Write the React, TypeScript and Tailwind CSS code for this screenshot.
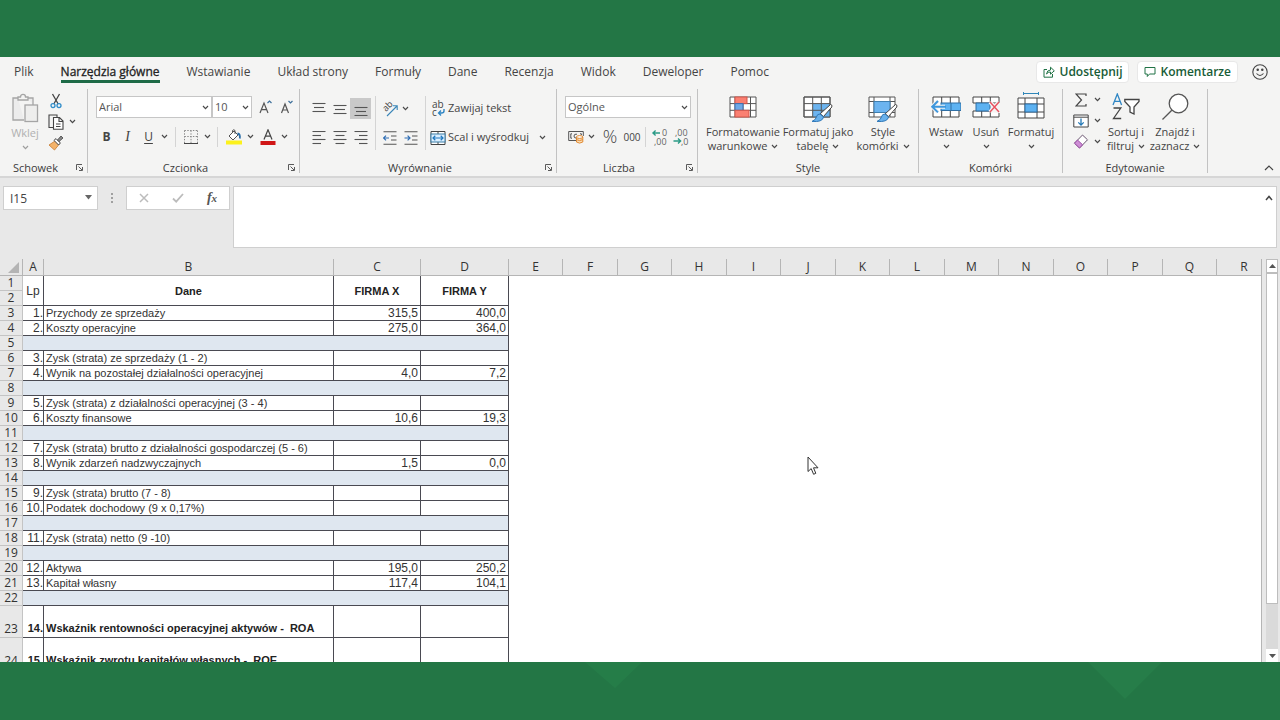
import type { ReactNode } from "react";

/* ---------- shared pieces ---------- */

function Chevron({ className = "" }: { className?: string }) {
  return (
    <svg className={`h-[5px] w-[7px] shrink-0 ${className}`} viewBox="0 0 7 5" fill="none" stroke="#4a4a4a" strokeWidth="1.2" aria-hidden="true">
      <path d="M1 1 L3.5 3.6 L6 1" />
    </svg>
  );
}

function Group({ label, launcher, width, children }: { label: string; launcher?: boolean; width: string; children: ReactNode }) {
  return (
    <section aria-label={label} className={`flex h-[84px] shrink-0 flex-col border-r border-[#c2c2c2] ${width}`}>
      <div className="flex-1">{children}</div>
      <div className="flex h-[11px] items-center">
        <span className="flex-1 text-center text-[11px] leading-[11px] text-[#3c3c3c]">{label}</span>
        {launcher && (
          <button aria-label={`${label}: więcej opcji`} className="flex h-[11px] w-4 items-center justify-center">
            <svg className="h-[7px] w-[7px]" viewBox="0 0 7 7" fill="none" stroke="#5a5a5a" strokeWidth="1" aria-hidden="true">
              <path d="M0.5 6 V0.5 H6 M2.5 2.5 L6 6 M6.5 3 V6.5 H3" />
            </svg>
          </button>
        )}
      </div>
    </section>
  );
}

function Tool({ label, width = "w-[21px]", active, children }: { label: string; width?: string; active?: boolean; children: ReactNode }) {
  return (
    <button aria-label={label} className={`flex h-[21px] shrink-0 items-center justify-center text-[#444] ${width} ${active ? "bg-[#c9c9c9]" : ""}`}>
      {children}
    </button>
  );
}

function BigTool({ lines, width, gray, children }: { lines: [string, string]; width: string; gray?: boolean; children: ReactNode }) {
  return (
    <button className={`flex shrink-0 flex-col items-center whitespace-nowrap text-[11px] leading-[14px] ${width} ${gray ? "text-[#b0b0b0]" : "text-[#444]"}`}>
      <span className="flex h-9 items-center justify-center">{children}</span>
      <span>{lines[0]}</span>
      <span className="flex h-[14px] items-center gap-1">
        {lines[1]}
        <Chevron className={gray ? "opacity-50" : ""} />
      </span>
    </button>
  );
}

function Rule({ className = "h-5" }: { className?: string }) {
  return <span className={`w-px shrink-0 bg-[#d4d4d4] ${className}`} />;
}

function Lines({ rows }: { rows: [number, number, number][] }) {
  return (
    <svg className="h-[14px] w-[14px]" viewBox="0 0 14 14" stroke="#555" strokeWidth="1.1" aria-hidden="true">
      {rows.map(([x1, x2, y]) => (
        <line key={y} x1={x1} x2={x2} y1={y} y2={y} />
      ))}
    </svg>
  );
}

/* ---------- icons ---------- */

const PasteIcon = () => (
  <svg className="h-[30px] w-7" viewBox="0 0 28 30" fill="none" stroke="#a5a5a5" strokeWidth="1.3" aria-hidden="true">
    <path d="M13 27 H2 V5 H7 M17 5 H22 V12" fill="#ececec" />
    <path d="M7 7 V4 H9.5 C9.5 0.5 14.5 0.5 14.5 4 H17 V7 Z" fill="#f4f4f3" />
    <rect x="14" y="12" width="12.5" height="16.5" fill="#eeeeed" />
  </svg>
);

const CutIcon = () => (
  <svg className="h-4 w-3" viewBox="0 0 12 16" fill="none" strokeWidth="1.3" aria-hidden="true">
    <path d="M2.5 1 L8.2 11 M9.5 1 L3.8 11" stroke="#444" />
    <circle cx="3" cy="12.6" r="2" stroke="#2f8cc9" />
    <circle cx="9" cy="12.6" r="2" stroke="#2f8cc9" />
  </svg>
);

const CopyIcon = () => (
  <svg className="h-4 w-4" viewBox="0 0 16 16" fill="none" stroke="#444" strokeWidth="1.1" aria-hidden="true">
    <path d="M5 13.5 H1 V1 H9 V3" />
    <path d="M5.5 3.5 H11.5 L15 7 V15.2 H5.5 Z M11 3.8 V7.5 H15 M8 10 H12.5 M8 12.5 H12.5" fill="#fff" />
  </svg>
);

const BrushIcon = () => (
  <svg className="h-4 w-4" viewBox="0 0 16 16" aria-hidden="true">
    <path d="M7 6 L1 10 L6.5 15 L11 9.5 Z" fill="#f4b36a" stroke="#c67a2f" strokeWidth="0.8" />
    <path d="M6 5.4 L8 3.6 L12.4 8 L10.6 10 Z" fill="#fff" stroke="#444" />
    <path d="M9.5 5 L13 1 L15 3 L11 6.6 Z" fill="#888" stroke="#444" strokeWidth="0.8" />
  </svg>
);

function FontSizeIcon({ grow }: { grow?: boolean }) {
  return (
    <svg className="h-4 w-4" viewBox="0 0 16 16" fill="none" stroke="#555" strokeWidth="1.2" aria-hidden="true">
      <path d={grow ? "M2 14 L6 4 L10 14 M3.5 10.6 H8.5" : "M2.5 14 L6 5 L9.5 14 M3.8 11 H8.2"} />
      <path d={grow ? "M9.5 4 L11.5 2 L13.5 4" : "M9.5 2 L11.5 4 L13.5 2"} stroke="#3d6f9a" />
    </svg>
  );
}

const BordersIcon = () => (
  <svg className="h-4 w-4" viewBox="0 0 16 16" fill="none" stroke="#888" aria-hidden="true">
    <path d="M1.5 1.5 H14.5 M1.5 7.5 H14.5 M1.5 1.5 V14 M8 1.5 V14 M14.5 1.5 V14" strokeDasharray="1.4 1.4" />
    <path d="M1 14.5 H15" stroke="#444" />
  </svg>
);

const FillIcon = () => (
  <svg className="h-4 w-4" viewBox="0 0 16 16" fill="none" aria-hidden="true">
    <rect x="0" y="11.5" width="16" height="4" fill="#fcf11c" />
    <path d="M3 7 L8 2 L12 6 L7 11 Z" fill="#fff" stroke="#555" />
    <path d="M6.5 4 V1.5 Q7.7 0 9 1.5 V5" stroke="#555" />
    <path d="M11.5 4.5 Q14.5 5 13.8 9.5" stroke="#2b6ea8" strokeWidth="1.8" />
  </svg>
);

const FontColorIcon = () => (
  <svg className="h-4 w-4" viewBox="0 0 16 16" fill="none" aria-hidden="true">
    <rect x="0.5" y="12" width="15" height="4" fill="#d01616" />
    <path d="M4 10.5 L8 0.8 L12 10.5 M5.4 7.2 H10.6" stroke="#444" strokeWidth="1.2" />
  </svg>
);

const OrientationIcon = () => (
  <svg className="h-4 w-4 overflow-visible" viewBox="0 0 16 16" fill="none" aria-hidden="true">
    <text x="0" y="0" fontSize="9" fill="#444" fontFamily="Open Sans" transform="translate(4 11) rotate(-45)">ab</text>
    <path d="M5 15 L15 5 M11 4.8 H15.2 V9" stroke="#3a86b8" strokeWidth="1.1" />
  </svg>
);

const WrapIcon = () => (
  <svg className="h-4 w-4 overflow-visible" viewBox="0 0 16 16" fill="none" aria-hidden="true">
    <text x="2" y="7" fontSize="10" fill="#444" fontFamily="Open Sans">ab</text>
    <text x="2" y="15" fontSize="10" fill="#444" fontFamily="Open Sans">c</text>
    <path d="M14 8 V10 Q14 12 11.5 12 H8.8 M11 9.6 L8.6 12 L11 14.4" stroke="#2f86c4" strokeWidth="1.4" />
  </svg>
);

const MergeIcon = () => (
  <svg className="h-4 w-4" viewBox="0 0 16 16" fill="none" aria-hidden="true">
    <path d="M1 1.5 H15 V14.5 H1 Z M8 1.5 V4 M8 12 V14.5" fill="#fff" stroke="#444" />
    <rect x="1" y="4" width="14" height="8" fill="#dcefff" stroke="#3a7ea8" />
    <path d="M3 8 H13 M5.3 5.8 L3 8 L5.3 10.2 M10.7 5.8 L13 8 L10.7 10.2" stroke="#2079c0" strokeWidth="1.2" />
  </svg>
);

function IndentIcon({ outward }: { outward?: boolean }) {
  return (
    <svg className="h-[14px] w-[14px]" viewBox="0 0 14 14" fill="none" stroke="#555" strokeWidth="1.1" aria-hidden="true">
      <path d="M0.5 0.8 H13.5 M8 5 H13.5 M8 9 H13.5 M0.5 13.2 H13.5" />
      <path d={outward ? "M0.5 7 H6 M3 4.6 L0.6 7 L3 9.4" : "M0.5 7 H6 M3.6 4.6 L6 7 L3.6 9.4"} stroke="#2e6db4" strokeWidth="1.2" />
    </svg>
  );
}

const MoneyIcon = () => (
  <svg className="h-[14px] w-4" viewBox="0 0 16 14" fill="none" stroke="#555" aria-hidden="true">
    <path d="M0.7 1.5 H15.3 V6 M0.7 1.5 V10.5 H8" />
    <path d="M4 3.8 H2.8 V8.2 H4 M12 3.8 H13.4 V5 M9 4.2 Q6 3.6 6 6 Q6 8.2 8 8" />
    <path d="M8.5 7 V12 Q11.5 14.2 14.8 12 V7" fill="#fbdcb4" stroke="#e08a33" />
    <ellipse cx="11.6" cy="7" rx="3.2" ry="1.4" fill="#fff" stroke="#e08a33" />
    <path d="M8.5 9.6 Q11.5 11.6 14.8 9.6" stroke="#e08a33" />
  </svg>
);

function DecimalIcon({ more }: { more?: boolean }) {
  return (
    <svg className="h-4 w-4 overflow-visible" viewBox="0 0 16 16" fill="none" aria-hidden="true">
      <g fontSize="9" fill="#666" fontFamily="Open Sans">
        <text x={more ? 10 : 2} y="7">{more ? "0" : ",00"}</text>
        <text x={more ? 2 : 8} y="16">{more ? ",00" : ",0"}</text>
      </g>
      <path d={more ? "M1 4 H8 M3.6 1.6 L1 4 L3.6 6.4" : "M0.5 12 H7.5 M5 9.6 L7.6 12 L5 14.4"} stroke="#2a9a86" strokeWidth="1.4" />
    </svg>
  );
}

const ConditionalIcon = () => (
  <svg className="h-[22px] w-7" viewBox="0 0 28 22" fill="none" stroke="#555" aria-hidden="true">
    <path d="M1 1 H27 V21 H1 Z M1 7.6 H27 M1 14.3 H27 M6 1 V21 M14 1 V21 M21.5 1 V21" fill="#fff" />
    <rect x="6" y="1" width="12" height="6.6" fill="#fa8072" stroke="#d5564a" />
    <rect x="6" y="7.6" width="8" height="6.7" fill="#6fa8e6" stroke="#3f6fb0" />
    <rect x="6" y="14.3" width="14" height="6.7" fill="#fa8072" stroke="#d5564a" />
  </svg>
);

const PaintBrush = () => (
  <g>
    <path d="M27.5 8.5 Q29.5 8.5 28.8 11 L20.5 20.5 L17.2 17.8 Z" fill="#fff" stroke="#444" />
    <path d="M17 18 L20.6 21 Q19.5 26.4 9 25.4 Q13 23.8 13.4 21 Q14.2 17.8 17 18 Z" fill="#69b1ec" stroke="#2f78b8" />
  </g>
);

const TableIcon = () => (
  <svg className="mt-1 h-[27px] w-[30px]" viewBox="0 0 30 27" fill="none" stroke="#555" aria-hidden="true">
    <path d="M1 1 H27 V21 H1 Z" fill="#fff" />
    <path d="M9.7 7.6 H27 V21 H9.7 Z" fill="#6cb4f0" stroke="none" />
    <path d="M1 1 H27 V21 H1 Z M1 7.6 H27 M1 14.3 H27 M9.7 1 V21 M18.3 1 V21" />
    <PaintBrush />
  </svg>
);

const CellStyleIcon = () => (
  <svg className="mt-1 h-[27px] w-[30px]" viewBox="0 0 30 27" fill="none" stroke="#555" aria-hidden="true">
    <path d="M1 1 H27 V21 H1 Z M1 5.5 H27 M1 16.5 H27 M6 1 V21 M22 1 V21" fill="#fff" />
    <rect x="6" y="5.5" width="16" height="11" fill="#6cb4f0" stroke="#3f7fb0" />
    <PaintBrush />
  </svg>
);

const InsertIcon = () => (
  <svg className="h-[22px] w-[30px]" viewBox="0 0 30 22" fill="none" stroke="#444" aria-hidden="true">
    <path d="M2 1 H28 V21 H2 Z M10.7 1 V21 M19.3 1 V21" fill="#fff" />
    <rect x="10" y="7" width="20" height="7.5" fill="#5db2f2" stroke="#2f6fa5" />
    <path d="M20 7 V14.5" stroke="#2f6fa5" />
    <path d="M14 10.7 H2 M7 5 L1.2 10.7 L7 16.4" stroke="#f4f4f3" strokeWidth="4" />
    <path d="M15 10.7 H1.4 M7 5 L1.2 10.7 L7 16.4" stroke="#3e97dd" strokeWidth="2" />
  </svg>
);

const DeleteIcon = () => (
  <svg className="h-[22px] w-7" viewBox="0 0 28 22" fill="none" stroke="#444" aria-hidden="true">
    <path d="M1 7 V1 H27 V7 M1 15 V21 H27 V17 M9.7 1 V7 M18.3 1 V7 M9.7 15 V21 M18.3 15 V21 M1 7 H27 M1 15 H18" fill="#fff" />
    <path d="M4 7 H18 V15 H4 Z" fill="#5db2f2" stroke="#2f6fa5" />
    <path d="M18 6 L27 16 M27 6 L18 16" stroke="#f4f4f3" strokeWidth="4" />
    <path d="M18 6 L27 16 M27 6 L18 16" stroke="#e9505e" strokeWidth="1.4" />
  </svg>
);

const FormatIcon = () => (
  <svg className="mb-1 h-[27px] w-7" viewBox="0 0 28 27" fill="none" stroke="#444" aria-hidden="true">
    <path d="M6.5 1.5 H21.5 M6.5 0 V3 M21.5 0 V3" stroke="#2f86b8" />
    <path d="M1 6 H27 V26 H1 Z M1 12 H27 M1 20 H27 M8 6 V26 M20 6 V26" fill="#fff" />
    <rect x="8" y="12" width="12" height="8" fill="#5db2f2" stroke="#2f6fa5" />
  </svg>
);

const SumIcon = () => (
  <svg className="h-[14px] w-3" viewBox="0 0 12 14" fill="none" stroke="#444" strokeWidth="1.2" aria-hidden="true">
    <path d="M11 3 V1 H1 L6.5 7 L1 13 H11 V11" />
  </svg>
);

const FillDownIcon = () => (
  <svg className="h-[14px] w-4" viewBox="0 0 16 14" fill="none" stroke="#444" aria-hidden="true">
    <path d="M0.8 1 H15.2 V13 H0.8 Z M0.8 3.2 H15.2" fill="#fff" />
    <path d="M8 4.6 V11 M5.3 8.4 L8 11.1 L10.7 8.4" stroke="#2378b5" strokeWidth="1.3" />
  </svg>
);

const EraserIcon = () => (
  <svg className="h-[15px] w-4" viewBox="0 0 16 15" fill="none" aria-hidden="true">
    <path d="M9.5 1 L14.5 5.8 L6.5 14 L1.5 9.2 Z" fill="#fff" stroke="#6a5570" />
    <path d="M4.5 6 L9.6 10.8 L6.5 14 L1.5 9.2 Z" fill="#cf8fd6" stroke="#9a4fa5" />
  </svg>
);

const SortIcon = () => (
  <svg className="h-7 w-7" viewBox="0 0 28 28" fill="none" strokeWidth="1.3" aria-hidden="true">
    <path d="M1 12 L5.3 1 L9.6 12 M2.6 8.4 H8" stroke="#2f86c4" />
    <path d="M1.5 15 H8.8 L1.5 25.5 H9.2" stroke="#444" />
    <path d="M12.8 6.5 H27 V8.5 L22 14 V21 L18 19 V14 L12.8 8.5 Z" stroke="#444" fill="#fff" />
  </svg>
);

const SearchIcon = () => (
  <svg className="h-7 w-7" viewBox="0 0 28 28" fill="none" stroke="#555" strokeWidth="1.3" aria-hidden="true">
    <circle cx="17.5" cy="10.5" r="9.3" fill="#fff" />
    <path d="M10.8 17.2 L1.5 26.5" />
  </svg>
);

/* ---------- ribbon ---------- */

const tabs = ["Plik", "Narzędzia główne", "Wstawianie", "Układ strony", "Formuły", "Dane", "Recenzja", "Widok", "Deweloper", "Pomoc"];

function TabBar() {
  return (
    <div className="flex h-8 items-start">
      <nav className="flex flex-1 gap-[27px] pl-[14px]" aria-label="Karty wstążki">
        {tabs.map((tab) => (
          <button key={tab} className="pt-[7px] text-[12px] leading-4 text-[#444]">
            <span className={tab === "Narzędzia główne" ? "block border-b-[3px] border-[#1e6b47] text-[#222] [-webkit-text-stroke:0.3px_#222]" : "block border-b-[3px] border-transparent"}>{tab}</span>
          </button>
        ))}
      </nav>
      <div className="flex items-center gap-2 pt-1 pr-3 text-[12px] font-semibold text-[#185c37]">
        <button className="flex h-[22px] items-center gap-1 rounded-sm border border-[#e8e8e8] bg-white px-[6px]">
          <svg className="h-3 w-3" viewBox="0 0 12 12" fill="none" stroke="#217346" strokeWidth="1" aria-hidden="true">
            <path d="M4 3.5 H1 V11.2 H9.5 V8" />
            <path d="M3.5 8 Q4 4 7.5 4 V1.2 L11.3 4.8 L7.5 8.2 V6 Q5 5.8 3.5 8 Z" />
          </svg>
          Udostępnij
        </button>
        <button className="flex h-[22px] items-center gap-1 rounded-sm border border-[#e8e8e8] bg-white px-[6px]">
          <svg className="h-3 w-3" viewBox="0 0 12 12" fill="none" stroke="#217346" aria-hidden="true">
            <path d="M1 1.5 H11 V8 H5.5 L3.3 10.5 V8 H1 Z" />
          </svg>
          Komentarze
        </button>
        <button aria-label="Opinia" className="ml-[6px] h-4 w-4">
          <svg className="h-4 w-4" viewBox="0 0 16 16" fill="none" stroke="#444" strokeWidth="1.1" aria-hidden="true">
            <circle cx="8" cy="8" r="7.2" />
            <path d="M4.5 9.5 Q8 13.4 11.5 9.5" />
            <circle cx="5.7" cy="5.8" r="0.7" fill="#444" />
            <circle cx="10.3" cy="5.8" r="0.7" fill="#444" />
          </svg>
        </button>
      </div>
    </div>
  );
}

function Picker({ label, options, width }: { label: string; options: string[]; width: string }) {
  return (
    <label className={`relative block h-[22px] shrink-0 ${width}`}>
      <span className="sr-only">{label}</span>
      <select className="block h-full w-full appearance-none border border-[#c6c6c6] bg-white pl-[2px] text-[11px] leading-4 text-[#555]">
        {options.map((o) => (
          <option key={o}>{o}</option>
        ))}
      </select>
      <Chevron className="pointer-events-none absolute top-[9px] right-[3px]" />
    </label>
  );
}

function Ribbon() {
  return (
    <div className="flex">
      <Group label="Schowek" launcher width="w-[88px]">
        <div className="flex pt-px pl-[11px]">
          <BigTool lines={["Wklej", ""]} width="w-7" gray><PasteIcon /></BigTool>
          <div className="flex flex-col pl-[6px]">
            <Tool label="Wytnij"><CutIcon /></Tool>
            <div className="flex items-center">
              <Tool label="Kopiuj"><CopyIcon /></Tool>
              <Chevron className="ml-[3px]" />
            </div>
            <Tool label="Malarz formatów"><BrushIcon /></Tool>
          </div>
        </div>
      </Group>

      <Group label="Czcionka" launcher width="w-[212px]">
        <div className="flex flex-col gap-2 pt-[7px] pl-2">
          <div className="flex items-center">
            <Picker label="Czcionka" options={["Arial"]} width="w-[116px]" />
            <Picker label="Rozmiar" options={["10"]} width="w-10" />
            <span className="flex pl-[3px]">
              <Tool label="Zwiększ rozmiar"><FontSizeIcon grow /></Tool>
              <Tool label="Zmniejsz rozmiar"><FontSizeIcon /></Tool>
            </span>
          </div>
          <div className="flex items-center">
            <Tool label="Pogrubienie"><span className="text-[12px] font-bold">B</span></Tool>
            <Tool label="Kursywa"><span className="font-['Liberation_Serif'] text-[14px] italic">I</span></Tool>
            <Tool label="Podkreślenie"><span className="text-[12px] underline underline-offset-2">U</span></Tool>
            <Chevron className="mx-[2px]" />
            <span className="flex w-[10px] justify-center"><Rule /></span>
            <Tool label="Obramowanie"><BordersIcon /></Tool>
            <Chevron className="ml-[3px]" />
            <span className="flex w-3 justify-center"><Rule /></span>
            <Tool label="Kolor wypełnienia"><FillIcon /></Tool>
            <Chevron className="mx-[3px]" />
            <Tool label="Kolor czcionki"><FontColorIcon /></Tool>
            <Chevron className="ml-[3px]" />
          </div>
        </div>
      </Group>

      <Group label="Wyrównanie" launcher width="w-[257px]">
        <div className="flex items-center pt-[7px] pl-2">
          <div className="grid grid-cols-[21px_21px_21px] gap-y-2">
            <Tool label="Do góry"><Lines rows={[[0.5, 13.5, 1.5], [2, 12, 5.5], [0.5, 13.5, 9.5]]} /></Tool>
            <Tool label="Do środka w pionie"><Lines rows={[[0.5, 13.5, 3.5], [2, 12, 7.5], [0.5, 13.5, 11.5]]} /></Tool>
            <Tool label="Do dołu" active><Lines rows={[[0.5, 13.5, 5.5], [2, 12, 9.5], [0.5, 13.5, 13.5]]} /></Tool>
            <Tool label="Do lewej"><Lines rows={[[0.5, 13.5, 0.5], [0.5, 9, 4.5], [0.5, 13.5, 8.5], [0.5, 9, 12.5]]} /></Tool>
            <Tool label="Do środka"><Lines rows={[[0.5, 13.5, 0.5], [2.5, 11.5, 4.5], [0.5, 13.5, 8.5], [2.5, 11.5, 12.5]]} /></Tool>
            <Tool label="Do prawej"><Lines rows={[[0.5, 13.5, 0.5], [5, 13.5, 4.5], [0.5, 13.5, 8.5], [5, 13.5, 12.5]]} /></Tool>
          </div>
          <span className="flex w-2 justify-center"><Rule className="h-[54px]" /></span>
          <div className="flex flex-col gap-2">
            <div className="flex items-center">
              <Tool label="Orientacja"><OrientationIcon /></Tool>
              <Chevron className="ml-[2px]" />
            </div>
            <div className="flex">
              <Tool label="Zmniejsz wcięcie"><IndentIcon outward /></Tool>
              <Tool label="Zwiększ wcięcie"><IndentIcon /></Tool>
            </div>
          </div>
          <span className="flex w-2 justify-center"><Rule className="h-[54px]" /></span>
          <div className="flex flex-col gap-2 pl-px text-[11px] whitespace-nowrap text-[#444]">
            <button className="flex h-[21px] items-center gap-[2px]"><WrapIcon />Zawijaj tekst</button>
            <button className="flex h-[21px] items-center gap-[2px]"><MergeIcon />Scal i wyśrodkuj<Chevron className="ml-2" /></button>
          </div>
        </div>
      </Group>

      <Group label="Liczba" launcher width="w-[141px]">
        <div className="flex flex-col gap-2 pt-[7px] pl-2">
          <Picker label="Format liczb" options={["Ogólne"]} width="w-[126px]" />
          <div className="flex items-center">
            <Tool label="Format księgowy"><MoneyIcon /></Tool>
            <Chevron className="mx-[2px]" />
            <Tool label="Zapis procentowy" width="w-[26px]"><span className="text-[18px] font-light">%</span></Tool>
            <Tool label="Zapis dziesiętny" width="w-[18px]"><span className="text-[10px] leading-4">000</span></Tool>
            <span className="flex w-2 justify-center"><Rule /></span>
            <Tool label="Zwiększ dziesiętne"><DecimalIcon more /></Tool>
            <Tool label="Zmniejsz dziesiętne"><DecimalIcon /></Tool>
          </div>
        </div>
      </Group>

      <Group label="Style" width="w-[221px]">
        <div className="flex pl-[7px]">
          <BigTool lines={["Formatowanie", "warunkowe"]} width="w-[76px]"><ConditionalIcon /></BigTool>
          <BigTool lines={["Formatuj jako", "tabelę"]} width="w-[74px]"><TableIcon /></BigTool>
          <BigTool lines={["Style", "komórki"]} width="w-[56px]"><CellStyleIcon /></BigTool>
        </div>
      </Group>

      <Group label="Komórki" width="w-36">
        <div className="flex pl-[7px]">
          <BigTool lines={["Wstaw", ""]} width="w-10"><InsertIcon /></BigTool>
          <BigTool lines={["Usuń", ""]} width="w-10"><DeleteIcon /></BigTool>
          <BigTool lines={["Formatuj", ""]} width="w-[50px]"><FormatIcon /></BigTool>
        </div>
      </Group>

      <Group label="Edytowanie" width="w-[145px]">
        <div className="flex pl-[7px]">
          <div className="flex w-[31px] flex-col">
            <div className="flex items-center gap-[3px]"><Tool label="Autosumowanie"><SumIcon /></Tool><Chevron /></div>
            <div className="flex items-center gap-[3px]"><Tool label="Wypełnij"><FillDownIcon /></Tool><Chevron /></div>
            <div className="flex items-center gap-[3px]"><Tool label="Wyczyść"><EraserIcon /></Tool><Chevron /></div>
          </div>
          <BigTool lines={["Sortuj i", "filtruj"]} width="w-[50px]"><SortIcon /></BigTool>
          <BigTool lines={["Znajdź i", "zaznacz"]} width="w-12"><SearchIcon /></BigTool>
        </div>
      </Group>

      <button aria-label="Zwiń wstążkę" className="mr-[6px] ml-auto flex h-[10px] w-[10px] items-center justify-center self-end">
        <svg className="h-[6px] w-[10px]" viewBox="0 0 10 6" fill="none" stroke="#444" strokeWidth="1.2" aria-hidden="true">
          <path d="M1 5 L5 1 L9 5" />
        </svg>
      </button>
    </div>
  );
}

/* ---------- formula bar ---------- */

function FormulaBar() {
  return (
    <div className="flex items-start border-t-2 border-[#d6d6d6] px-[3px] pt-2 pb-[11px]">
      <label className="relative block w-[95px] shrink-0">
        <span className="sr-only">Pole nazwy</span>
        <input defaultValue="I15" className="block h-6 w-full border border-[#cfcfcf] bg-white pl-[6px] text-[12px] text-[#444]" />
        <svg className="pointer-events-none absolute top-[9px] right-[6px] h-[5px] w-[7px]" viewBox="0 0 7 5" fill="#666" aria-hidden="true">
          <path d="M0 0 H7 L3.5 4.5 Z" />
        </svg>
      </label>
      <span className="flex h-6 w-7 items-center justify-center" aria-hidden="true">
        <svg className="h-[10px] w-[2px]" viewBox="0 0 2 10" fill="#a0a0a0">
          <path d="M0 0 H2 V2 H0 Z M0 4 H2 V6 H0 Z M0 8 H2 V10 H0 Z" />
        </svg>
      </span>
      <div className="flex h-6 w-[104px] shrink-0 items-center border border-[#cfcfcf] bg-white">
        <button aria-label="Anuluj" className="flex flex-1 justify-center">
          <svg className="h-[10px] w-[10px]" viewBox="0 0 10 10" stroke="#bcbcbc" strokeWidth="1.5" aria-hidden="true">
            <path d="M1 1 L9 9 M9 1 L1 9" />
          </svg>
        </button>
        <button aria-label="Wpis" className="flex flex-1 justify-center">
          <svg className="h-[10px] w-3" viewBox="0 0 12 10" fill="none" stroke="#bcbcbc" strokeWidth="1.8" aria-hidden="true">
            <path d="M1 5.5 L4.2 8.7 L11 1" />
          </svg>
        </button>
        <button aria-label="Wstaw funkcję" className="flex-1 text-center font-['Liberation_Serif'] text-[14px] leading-5 font-bold text-[#555] italic">
          f<span className="text-[11px]">x</span>
        </button>
      </div>
      <div className="relative ml-[3px] h-[62px] flex-1 border border-[#cfcfcf] bg-white">
        <textarea aria-label="Pasek formuły" className="block h-full w-full resize-none px-2 pr-5 text-[12px] outline-none" />
        <button aria-label="Zwiń pasek formuły" className="absolute top-2 right-[3px] flex h-[6px] w-2">
          <svg className="h-[6px] w-2" viewBox="0 0 8 6" fill="none" stroke="#444" strokeWidth="1.5" aria-hidden="true">
            <path d="M1 5 L4 1.5 L7 5" />
          </svg>
        </button>
      </div>
    </div>
  );
}

/* ---------- worksheet ---------- */

type Row = { n: number; lp?: string; name?: string; x?: string; y?: string; tall?: boolean };

const rows: Row[] = [
  { n: 3, lp: "1.", name: "Przychody ze sprzedaży", x: "315,5", y: "400,0" },
  { n: 4, lp: "2.", name: "Koszty operacyjne", x: "275,0", y: "364,0" },
  { n: 5 },
  { n: 6, lp: "3.", name: "Zysk (strata) ze sprzedaży (1 - 2)" },
  { n: 7, lp: "4.", name: "Wynik na pozostałej działalności operacyjnej", x: "4,0", y: "7,2" },
  { n: 8 },
  { n: 9, lp: "5.", name: "Zysk (strata) z działalności operacyjnej (3 - 4)" },
  { n: 10, lp: "6.", name: "Koszty finansowe", x: "10,6", y: "19,3" },
  { n: 11 },
  { n: 12, lp: "7.", name: "Zysk (strata) brutto z działalności gospodarczej (5 - 6)" },
  { n: 13, lp: "8.", name: "Wynik zdarzeń nadzwyczajnych", x: "1,5", y: "0,0" },
  { n: 14 },
  { n: 15, lp: "9.", name: "Zysk (strata) brutto (7 - 8)" },
  { n: 16, lp: "10.", name: "Podatek dochodowy (9 x 0,17%)" },
  { n: 17 },
  { n: 18, lp: "11.", name: "Zysk (strata) netto (9 -10)" },
  { n: 19 },
  { n: 20, lp: "12.", name: "Aktywa", x: "195,0", y: "250,2" },
  { n: 21, lp: "13.", name: "Kapitał własny", x: "117,4", y: "104,1" },
  { n: 22 },
  { n: 23, lp: "14.", name: "Wskaźnik rentowności operacyjnej aktywów -  ROA", tall: true },
  { n: 24, lp: "15.", name: "Wskaźnik zwrotu kapitałów własnych -  ROE", tall: true },
];

const blankColumns = ["E", "F", "G", "H", "I", "J", "K", "L", "M", "N", "O", "P", "Q", "R"];

const cell = "border-r border-b border-[#4a4a52] p-0 whitespace-pre";
const title = "text-center text-[11px] font-bold text-[#222]";
const rowHead = "border-r border-b border-[#c4c4c4] bg-[#e8e8e8] p-0 text-center align-bottom font-['Open_Sans',sans-serif] font-normal text-[#333]";

function Sheet() {
  return (
    <table className="w-[1272px] table-fixed border-separate border-spacing-0 font-['Liberation_Sans',Arial,sans-serif] text-[12px] leading-[14px] text-[#333]">
      <colgroup>
        <col className="w-[23px]" />
        <col className="w-[21px]" />
        <col className="w-[290px]" />
        <col className="w-[87px]" />
        <col className="w-[88px]" />
        {blankColumns.map((c, i) => (
          <col key={c} className={i % 2 ? "w-[55px]" : "w-[54px]"} />
        ))}
      </colgroup>
      <thead>
        <tr className="h-[17px] bg-[#e8e8e8] font-['Open_Sans',sans-serif]">
          <th className="border-r border-b border-[#b5b5b5] p-0" aria-label="Zaznacz wszystko">
            <svg className="ml-2 h-[11px] w-[11px]" viewBox="0 0 11 11" fill="#b4b4b4" aria-hidden="true">
              <path d="M11 0 V11 H0 Z" />
            </svg>
          </th>
          {["A", "B", "C", "D", ...blankColumns].map((c) => (
            <th key={c} scope="col" className="border-r border-b border-[#b5b5b5] p-0 font-normal">{c}</th>
          ))}
        </tr>
      </thead>
      <tbody>
        <tr className="h-[15px]">
          <th scope="row" className={rowHead}>1</th>
          <td rowSpan={2} className={`${cell} text-center`}>Lp</td>
          <td rowSpan={2} className={`${cell} ${title}`}>Dane</td>
          <td rowSpan={2} className={`${cell} ${title}`}>FIRMA X</td>
          <td rowSpan={2} className={`${cell} ${title}`}>FIRMA Y</td>
          <td colSpan={14} rowSpan={24} />
        </tr>
        <tr className="h-[15px]">
          <th scope="row" className={rowHead}>2</th>
        </tr>
        {rows.map((r) => (
          <tr key={r.n} className={r.tall ? "h-8 align-bottom font-bold text-[#222]" : "h-[15px]"}>
            <th scope="row" className={`${rowHead} ${r.tall ? "pb-px" : ""}`}>{r.n}</th>
            {r.name ? (
              <>
                <td className={`${cell} text-right ${r.tall ? "pb-[2px] text-[11px]" : ""}`}>{r.lp}</td>
                <td className={`${cell} pl-[2px] text-[11px] ${r.tall ? "pb-[2px]" : ""}`}>{r.name}</td>
                <td className={`${cell} pr-[2px] text-right`}>{r.x}</td>
                <td className={`${cell} pr-[2px] text-right`}>{r.y}</td>
              </>
            ) : (
              <td colSpan={4} className={`${cell} bg-[#dfe7f0]`} />
            )}
          </tr>
        ))}
      </tbody>
    </table>
  );
}

function ScrollBar() {
  return (
    <div className="flex w-[18px] shrink-0 flex-col bg-[#e8e8e8] pr-[2px] pl-1">
      <button aria-label="Przewiń w górę" className="flex h-[14px] items-center justify-center border border-[#bdbdbd] bg-white">
        <svg className="h-1 w-[7px]" viewBox="0 0 7 4" fill="#555" aria-hidden="true"><path d="M0 4 L3.5 0 L7 4 Z" /></svg>
      </button>
      <div className="flex flex-1 flex-col bg-[#dadada]">
        <div className="h-[88%] border border-[#bdbdbd] bg-white" />
      </div>
      <button aria-label="Przewiń w dół" className="flex h-[13px] items-center justify-center bg-white">
        <svg className="h-1 w-[7px]" viewBox="0 0 7 4" fill="#555" aria-hidden="true"><path d="M0 0 H7 L3.5 4 Z" /></svg>
      </button>
    </div>
  );
}

export default function App() {
  return (
    <div className="relative flex h-screen flex-col overflow-hidden bg-[#237645] font-['Open_Sans','Noto_Sans',sans-serif]">
      <div className="h-[57px] shrink-0" />
      <main className="flex min-h-0 flex-1 flex-col bg-[#e8e8e8]">
        <header className="shrink-0 bg-[#f4f4f3] pb-[3px]">
          <TabBar />
          <Ribbon />
        </header>
        <FormulaBar />
        <div className="flex min-h-0 flex-1">
          <div className="min-w-0 flex-1 overflow-hidden border-r border-[#b5b5b5] bg-white">
            <Sheet />
          </div>
          <ScrollBar />
        </div>
      </main>
      <footer className="h-[58px] shrink-0">
        <svg className="h-full w-full" viewBox="0 0 1280 58" preserveAspectRatio="none" fill="#27804a" aria-hidden="true">
          <path d="M585 0 H642 L615 26 Z" opacity="0.7" />
          <path d="M1088 0 H1162 L1125 37 Z" opacity="0.8" />
        </svg>
      </footer>
      <svg className="pointer-events-none absolute top-[456px] left-[807px] h-5 w-3" viewBox="0 0 12 20" fill="#fff" stroke="#333" aria-hidden="true">
        <path d="M1 1 V15.5 L4.2 12.6 L6.6 18.3 L8.8 17.3 L6.5 11.8 H11 Z" />
      </svg>
    </div>
  );
}
